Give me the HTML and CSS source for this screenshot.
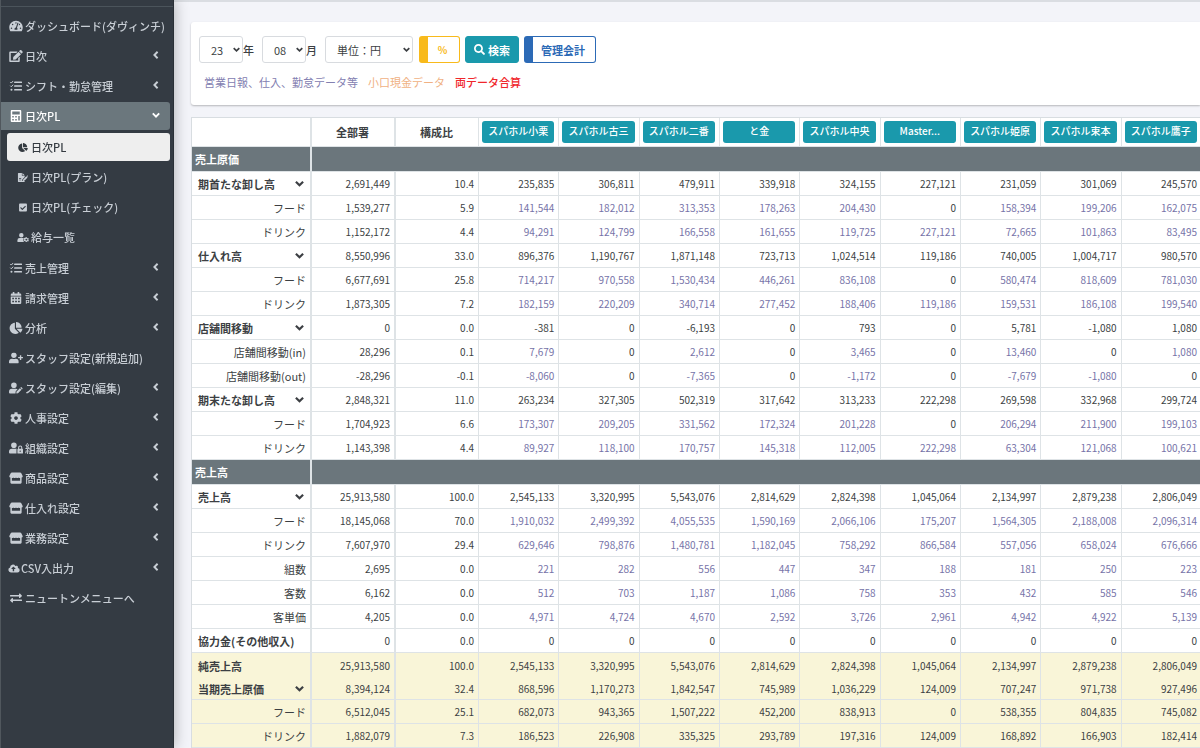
FILE: index.html
```html
<!DOCTYPE html>
<html lang="ja">
<head>
<meta charset="utf-8">
<title>日次PL</title>
<link rel="stylesheet" href="styles.css">
</head>
<body>
<svg class="sprite" aria-hidden="true">
  <symbol id="gauge" viewBox="0 0 576 512"><path d="M288 32C128.94 32 0 160.94 0 320c0 52.8 14.25 102.26 39.06 144.8 5.61 9.62 16.3 15.2 27.44 15.2h443c11.14 0 21.83-5.58 27.44-15.2C561.75 422.26 576 372.8 576 320c0-159.06-128.94-288-288-288zm0 64c14.71 0 26.58 10.13 30.32 23.65-1.11 2.26-2.64 4.23-3.45 6.67l-9.22 27.67c-5.13 3.49-10.97 6.01-17.64 6.01-17.67 0-32-14.33-32-32S270.33 96 288 96zM96 384c-17.67 0-32-14.33-32-32s14.33-32 32-32 32 14.33 32 32-14.33 32-32 32zm48-160c-17.67 0-32-14.33-32-32s14.33-32 32-32 32 14.33 32 32-14.33 32-32 32zm246.77-72.41l-61.33 184C343.13 347.33 352 364.54 352 384c0 11.72-3.38 22.55-8.88 32H232.88c-5.5-9.45-8.88-20.28-8.88-32 0-33.94 26.5-61.43 59.9-63.59l61.34-184.01c4.17-12.56 17.73-19.45 30.36-15.17 12.57 4.19 19.35 17.79 15.17 30.36zm14.66 57.2l15.52-46.55c3.47-1.29 7.13-2.23 11.05-2.23 17.67 0 32 14.33 32 32s-14.33 32-32 32c-11.38-.01-20.89-6.28-26.57-15.22zM480 384c-17.67 0-32-14.33-32-32s14.33-32 32-32 32 14.33 32 32-14.33 32-32 32z"/></symbol>
  <symbol id="edit" viewBox="0 0 576 512"><path d="M402.6 83.2l90.2 90.2c3.8 3.8 3.8 10 0 13.8L274.4 405.6l-92.8 10.3c-12.4 1.4-22.9-9.1-21.5-21.5l10.3-92.8L388.8 83.2c3.8-3.8 10-3.8 13.8 0zm162-22.9l-48.8-48.8c-15.2-15.2-39.9-15.2-55.2 0l-35.4 35.4c-3.8 3.8-3.8 10 0 13.8l90.2 90.2c3.8 3.8 10 3.8 13.8 0l35.4-35.4c15.2-15.3 15.2-40 0-55.2zM384 346.2V448H64V128h229.8c3.2 0 6.2-1.3 8.5-3.5l40-40c7.6-7.6 2.2-20.5-8.5-20.5H48C21.5 64 0 85.5 0 112v352c0 26.5 21.5 48 48 48h352c26.5 0 48-21.5 48-48V306.2c0-10.7-12.9-16-20.5-8.5l-40 40c-2.2 2.3-3.5 5.3-3.5 8.5z"/></symbol>
  <symbol id="tasks" viewBox="0 0 512 512"><path fill="none" stroke="currentColor" stroke-width="42" stroke-linecap="round" stroke-linejoin="round" d="M22 96l34 34 68-76M22 254l34 34 68-76"/><circle cx="62" cy="416" r="44"/><path d="M192 64h304q16 0 16 16v32q0 16-16 16H192q-16 0-16-16V80q0-16 16-16zM192 224h304q16 0 16 16v32q0 16-16 16H192q-16 0-16-16v-32q0-16 16-16zM192 384h304q16 0 16 16v32q0 16-16 16H192q-16 0-16-16v-32q0-16 16-16z"/></symbol>
  <symbol id="calc" viewBox="0 0 448 512"><path fill-rule="evenodd" d="M40 0h368q40 0 40 40v432q0 40-40 40H40q-40 0-40-40V40Q0 0 40 0zM64 64v128h320V64zM64 256v64h64v-64zM192 256v64h64v-64zM320 256v192h64V256zM64 384v64h64v-64zM192 384v64h64v-64z"/></symbol>
  <symbol id="pie" viewBox="0 0 544 512"><path d="M527.79 288H290.5l158.03 158.03c6.04 6.04 15.98 6.53 22.19.68 38.7-36.46 65.32-85.61 73.13-140.86 1.34-9.46-6.51-17.85-16.06-17.85zm-15.83-64.8C503.72 103.74 408.26 8.28 288.8.04 279.68-.59 272 7.1 272 16.24V240h223.77c9.14 0 16.82-7.68 16.19-16.8zM224 288V50.71c0-9.55-8.39-17.4-17.84-16.06C86.99 51.49-4.1 155.6.14 280.37 4.5 408.51 114.83 513.59 243.03 511.98c50.4-.63 96.97-16.87 135.26-44.03 7.9-5.6 8.42-17.23 1.57-24.08L224 288z"/></symbol>
  <symbol id="sign" viewBox="0 0 576 512"><path fill-rule="evenodd" d="M24 0h200v136q0 24 24 24h136v70L250 364v84h84l50-50v90q0 24-24 24H24q-24 0-24-24V24Q0 0 24 0zM64 380v36h120v-36zM64 300v36h120v-36zM256 0l128 128H256zM288 380l190-190 68 68-190 190h-68zM500 168l22-22q14-14 30 0l20 20q12 14 0 30l-22 22z"/></symbol>
  <symbol id="check" viewBox="0 0 448 512"><path fill-rule="evenodd" d="M48 32h352q48 0 48 48v352q0 48-48 48H48q-48 0-48-48V80q0-48 48-48zM196 394l184-184q10-10 0-22l-24-24q-12-10-22 0L184 314l-70-70q-10-10-22 0l-24 24q-10 12 0 22l104 104q12 10 24 0z"/></symbol>
  <symbol id="user" viewBox="0 0 448 512"><path d="M224 256c70.7 0 128-57.3 128-128S294.7 0 224 0 96 57.3 96 128s57.3 128 128 128zm89.6 32h-16.7c-22.2 10.2-46.9 16-72.9 16s-50.6-5.8-72.9-16h-16.7C60.2 288 0 348.2 0 422.4V464c0 26.5 21.5 48 48 48h352c26.5 0 48-21.5 48-48v-41.6c0-74.2-60.2-134.4-134.4-134.4z"/></symbol>
  <symbol id="user-plus" viewBox="0 0 640 512"><use href="#user" width="448" height="512"/><path d="M624 208h-64v-64c0-8.8-7.2-16-16-16h-32c-8.8 0-16 7.2-16 16v64h-64c-8.8 0-16 7.2-16 16v32c0 8.8 7.2 16 16 16h64v64c0 8.8 7.2 16 16 16h32c8.8 0 16-7.2 16-16v-64h64c8.8 0 16-7.2 16-16v-32c0-8.8-7.2-16-16-16z"/></symbol>
  <symbol id="user-cog" viewBox="0 0 640 512"><path d="M224 256a128 128 0 1 0 0-256 128 128 0 0 0 0 256zM134 288h180q30 0 56 14-26 32-20 66-22 30-6 66l30 78H48q-48 0-48-48v-42q0-134 134-134z"/><path fill-rule="evenodd" d="M480 240h64l10 42 32 18 42-12 12 40-10 24v40l22 34-32 54-44-12-30 16-10 28h-64l-12-40-30-16-40 12-30-54 28-30v-32l-28-32 30-54 42 12 30-16zM512 320a56 56 0 1 0 0 112 56 56 0 0 0 0-112z"/></symbol>
  <symbol id="user-edit" viewBox="0 0 640 512"><path d="M224 256a128 128 0 1 0 0-256 128 128 0 0 0 0 256zM134 288h180q44 0 80 28l-88 90-10 106H48q-48 0-48-48v-42q0-134 134-134z"/><path d="M338 426l160-160 72 72-160 160-72 14zM518 246l24-24q16-14 32 0l42 42q14 16 0 32l-24 24z"/></symbol>
  <symbol id="user-lock" viewBox="0 0 640 512"><path d="M224 256a128 128 0 1 0 0-256 128 128 0 0 0 0 256zM134 288h180q20 0 38 6-10 12-10 30v188H48q-48 0-48-48v-42q0-134 134-134z"/><path fill-rule="evenodd" d="M416 288v-48a96 96 0 0 1 192 0v48q32 0 32 32v160q0 32-32 32H416q-32 0-32-32V320q0-32 32-32zM464 288h96v-48a48 48 0 0 0-96 0zM512 368a32 32 0 1 0 0 64 32 32 0 0 0 0-64z"/></symbol>
  <symbol id="calendar" viewBox="0 0 448 512"><path fill-rule="evenodd" d="M96 0h48q12 0 12 12v52h136V12q0-12 12-12h48q12 0 12 12v52h36q48 0 48 48v48H0v-48q0-48 48-48h36V12Q84 0 96 0zM0 192h448v272q0 48-48 48H48q-48 0-48-48zM64 240v64h72v-64zM188 240v64h72v-64zM312 240v64h72v-64zM64 368v64h72v-64zM188 368v64h72v-64zM312 368v64h72v-64z"/></symbol>
  <symbol id="cog" viewBox="0 0 512 512"><path d="M487.4 315.7l-42.6-24.6c4.3-23.2 4.3-47 0-70.2l42.6-24.6c4.9-2.8 7.1-8.6 5.5-14-11.1-35.6-30-67.8-54.7-94.6-3.8-4.1-10-5.1-14.8-2.3L380.8 110c-17.9-15.4-38.5-27.3-60.8-35.1V25.8c0-5.6-3.9-10.5-9.4-11.7-36.7-8.2-74.3-7.8-109.2 0-5.5 1.2-9.4 6.1-9.4 11.7V75c-22.2 7.9-42.8 19.8-60.8 35.1L88.7 85.5c-4.9-2.8-11-1.9-14.8 2.3-24.7 26.7-43.6 58.9-54.7 94.6-1.7 5.4.6 11.2 5.5 14L67.3 221c-4.3 23.2-4.3 47 0 70.2l-42.6 24.6c-4.9 2.8-7.1 8.6-5.5 14 11.1 35.6 30 67.8 54.7 94.6 3.8 4.1 10 5.1 14.8 2.3l42.6-24.6c17.9 15.4 38.5 27.3 60.8 35.1v49.2c0 5.6 3.9 10.5 9.4 11.7 36.7 8.2 74.3 7.8 109.2 0 5.5-1.2 9.4-6.1 9.4-11.7v-49.2c22.2-7.9 42.8-19.8 60.8-35.1l42.6 24.6c4.9 2.8 11 1.9 14.8-2.3 24.7-26.7 43.6-58.9 54.7-94.6 1.5-5.5-.7-11.3-5.6-14.1zM256 336c-44.1 0-80-35.9-80-80s35.9-80 80-80 80 35.9 80 80-35.9 80-80 80z"/></symbol>
  <symbol id="store" viewBox="0 0 576 512"><path fill-rule="evenodd" d="M110 16h356q28 0 42 22l60 120q24 66-40 78v212q0 48-48 48H96q-48 0-48-48V236q-64-12-40-78L68 38q14-22 42-22zM112 256v112h352V256q-40-2-58-24-24 24-60 24t-58-24q-24 24-60 24t-58-24q-18 22-58 24z"/></symbol>
  <symbol id="cloud" viewBox="0 0 640 512"><path fill-rule="evenodd" d="M538 226q6-16 6-34a96 96 0 0 0-150-80A160 160 0 0 0 96 192v8A144 144 0 0 0 144 480h368a128 128 0 0 0 26-254zM394 288h-66v112q0 16-16 16h-48q-16 0-16-16V288h-66q-24-2-10-28l104-104q12-10 24 0l104 104q14 26-10 28z"/></symbol>
  <symbol id="swap" viewBox="0 0 512 512"><path d="M0 168v-16q0-24 24-24h360V80q4-30 40-16l80 80q14 16 0 32l-80 80q-36 14-40-16v-48H24q-24 0-24-24zM488 320H128v-48q-4-30-40-16L8 336q-14 16 0 32l80 80q36 14 40-16v-48h360q24 0 24-24v-16q0-24-24-24z"/></symbol>
  <symbol id="search" viewBox="0 0 512 512"><path d="M505 442.7L405.3 343c-4.5-4.5-10.6-7-17-7H372c27.6-35.3 44-79.7 44-128C416 93.1 322.9 0 208 0S0 93.1 0 208s93.1 208 208 208c48.3 0 92.7-16.4 128-44v16.3c0 6.4 2.5 12.5 7 17l99.7 99.7c9.4 9.4 24.6 9.4 33.9 0l28.3-28.3c9.4-9.4 9.4-24.6.1-34zM208 336c-70.7 0-128-57.2-128-128 0-70.7 57.2-128 128-128 70.7 0 128 57.2 128 128 0 70.7-57.2 128-128 128z"/></symbol>
  <symbol id="left" viewBox="0 0 10 10"><path fill="none" stroke="currentColor" stroke-width="2.4" d="M7 1L3 5l4 4"/></symbol>
  <symbol id="down" viewBox="0 0 10 10"><path fill="none" stroke="currentColor" stroke-width="2.4" d="M1 3l4 4 4-4"/></symbol>
</svg>
<div class="app">
  <nav class="sidebar">
    <ul class="menu">
      <li><a href="#"><svg class="icon"><use href="#gauge"/></svg>ダッシュボード(ダヴィンチ)</a></li>
      <li><a href="#"><svg class="icon"><use href="#edit"/></svg>日次<svg class="arrow"><use href="#left"/></svg></a></li>
      <li><a href="#"><svg class="icon"><use href="#tasks"/></svg>シフト・勤怠管理<svg class="arrow"><use href="#left"/></svg></a></li>
      <li><a href="#" class="open"><svg class="icon"><use href="#calc"/></svg>日次PL<svg class="arrow"><use href="#down"/></svg></a>
        <ul class="submenu">
          <li><a href="#" class="current"><svg class="icon"><use href="#pie"/></svg>日次PL</a></li>
          <li><a href="#"><svg class="icon"><use href="#sign"/></svg>日次PL(プラン)</a></li>
          <li><a href="#"><svg class="icon"><use href="#check"/></svg>日次PL(チェック)</a></li>
          <li><a href="#"><svg class="icon"><use href="#user-cog"/></svg>給与一覧</a></li>
        </ul>
      </li>
      <li><a href="#"><svg class="icon"><use href="#tasks"/></svg>売上管理<svg class="arrow"><use href="#left"/></svg></a></li>
      <li><a href="#"><svg class="icon"><use href="#calendar"/></svg>請求管理<svg class="arrow"><use href="#left"/></svg></a></li>
      <li><a href="#"><svg class="icon"><use href="#pie"/></svg>分析<svg class="arrow"><use href="#left"/></svg></a></li>
      <li><a href="#"><svg class="icon"><use href="#user-plus"/></svg>スタッフ設定(新規追加)</a></li>
      <li><a href="#"><svg class="icon"><use href="#user-edit"/></svg>スタッフ設定(編集)<svg class="arrow"><use href="#left"/></svg></a></li>
      <li><a href="#"><svg class="icon"><use href="#cog"/></svg>人事設定<svg class="arrow"><use href="#left"/></svg></a></li>
      <li><a href="#"><svg class="icon"><use href="#user-lock"/></svg>組織設定<svg class="arrow"><use href="#left"/></svg></a></li>
      <li><a href="#"><svg class="icon"><use href="#store"/></svg>商品設定<svg class="arrow"><use href="#left"/></svg></a></li>
      <li><a href="#"><svg class="icon"><use href="#store"/></svg>仕入れ設定<svg class="arrow"><use href="#left"/></svg></a></li>
      <li><a href="#"><svg class="icon"><use href="#store"/></svg>業務設定<svg class="arrow"><use href="#left"/></svg></a></li>
      <li><a href="#" class="compact"><svg class="icon"><use href="#cloud"/></svg>CSV入出力<svg class="arrow"><use href="#left"/></svg></a></li>
      <li><a href="#"><svg class="icon"><use href="#swap"/></svg>ニュートンメニューへ</a></li>
    </ul>
  </nav>
  <main class="main">
    <section class="card">
      <form class="filters">
        <span class="field"><select id="year" class="short"><option>23</option></select><svg class="caret"><use href="#down"/></svg></span>
        <label for="year">年</label>
        <span class="field"><select id="month" class="short"><option>08</option></select><svg class="caret"><use href="#down"/></svg></span>
        <label for="month">月</label>
        <span class="field"><select class="long" aria-label="単位"><option>単位：円</option></select><svg class="caret"><use href="#down"/></svg></span>
        <button type="button" class="btn striped yellow">%</button>
        <button type="button" class="btn search"><svg><use href="#search"/></svg>検索</button>
        <button type="button" class="btn striped blue">管理会計</button>
      </form>
      <p class="legend"><span class="daily">営業日報、仕入、勤怠データ等</span><span class="cash">小口現金データ</span><span class="both">両データ合算</span></p>
    </section>
    <div class="table-wrap">
      <table class="pl">
        <colgroup><col class="c-name"><col class="c-total"><col class="c-ratio"><col span="9"></colgroup>
        <thead>
          <tr><td></td><th>全部署</th><th>構成比</th><th><button type="button">スパホル小栗</button></th><th><button type="button">スパホル古三</button></th><th><button type="button">スパホル二番</button></th><th><button type="button">と金</button></th><th><button type="button">スパホル中央</button></th><th><button type="button">Master...</button></th><th><button type="button">スパホル姫原</button></th><th><button type="button">スパホル束本</button></th><th><button type="button">スパホル鷹子</button></th></tr>
        </thead>
        <tbody>
          <tr class="band"><th>売上原価</th><td colspan="11"></td></tr>
          <tr><th><button type="button" class="toggle">期首たな卸し高<svg><use href="#down"/></svg></button></th><td>2,691,449</td><td>10.4</td><td>235,835</td><td>306,811</td><td>479,911</td><td>339,918</td><td>324,155</td><td>227,121</td><td>231,059</td><td>301,069</td><td>245,570</td></tr>
          <tr class="sub"><th>フード</th><td>1,539,277</td><td>5.9</td><td>141,544</td><td>182,012</td><td>313,353</td><td>178,263</td><td>204,430</td><td class="zero">0</td><td>158,394</td><td>199,206</td><td>162,075</td></tr>
          <tr class="sub"><th>ドリンク</th><td>1,152,172</td><td>4.4</td><td>94,291</td><td>124,799</td><td>166,558</td><td>161,655</td><td>119,725</td><td>227,121</td><td>72,665</td><td>101,863</td><td>83,495</td></tr>
          <tr><th><button type="button" class="toggle">仕入れ高<svg><use href="#down"/></svg></button></th><td>8,550,996</td><td>33.0</td><td>896,376</td><td>1,190,767</td><td>1,871,148</td><td>723,713</td><td>1,024,514</td><td>119,186</td><td>740,005</td><td>1,004,717</td><td>980,570</td></tr>
          <tr class="sub"><th>フード</th><td>6,677,691</td><td>25.8</td><td>714,217</td><td>970,558</td><td>1,530,434</td><td>446,261</td><td>836,108</td><td class="zero">0</td><td>580,474</td><td>818,609</td><td>781,030</td></tr>
          <tr class="sub"><th>ドリンク</th><td>1,873,305</td><td>7.2</td><td>182,159</td><td>220,209</td><td>340,714</td><td>277,452</td><td>188,406</td><td>119,186</td><td>159,531</td><td>186,108</td><td>199,540</td></tr>
          <tr><th><button type="button" class="toggle">店舗間移動<svg><use href="#down"/></svg></button></th><td>0</td><td>0.0</td><td>-381</td><td>0</td><td>-6,193</td><td>0</td><td>793</td><td>0</td><td>5,781</td><td>-1,080</td><td>1,080</td></tr>
          <tr class="sub"><th>店舗間移動(in)</th><td>28,296</td><td>0.1</td><td>7,679</td><td class="zero">0</td><td>2,612</td><td class="zero">0</td><td>3,465</td><td class="zero">0</td><td>13,460</td><td class="zero">0</td><td>1,080</td></tr>
          <tr class="sub"><th>店舗間移動(out)</th><td>-28,296</td><td>-0.1</td><td>-8,060</td><td class="zero">0</td><td>-7,365</td><td class="zero">0</td><td>-1,172</td><td class="zero">0</td><td>-7,679</td><td>-1,080</td><td class="zero">0</td></tr>
          <tr><th><button type="button" class="toggle">期末たな卸し高<svg><use href="#down"/></svg></button></th><td>2,848,321</td><td>11.0</td><td>263,234</td><td>327,305</td><td>502,319</td><td>317,642</td><td>313,233</td><td>222,298</td><td>269,598</td><td>332,968</td><td>299,724</td></tr>
          <tr class="sub"><th>フード</th><td>1,704,923</td><td>6.6</td><td>173,307</td><td>209,205</td><td>331,562</td><td>172,324</td><td>201,228</td><td class="zero">0</td><td>206,294</td><td>211,900</td><td>199,103</td></tr>
          <tr class="sub"><th>ドリンク</th><td>1,143,398</td><td>4.4</td><td>89,927</td><td>118,100</td><td>170,757</td><td>145,318</td><td>112,005</td><td>222,298</td><td>63,304</td><td>121,068</td><td>100,621</td></tr>
          <tr class="band"><th>売上高</th><td colspan="11"></td></tr>
          <tr><th><button type="button" class="toggle">売上高<svg><use href="#down"/></svg></button></th><td>25,913,580</td><td>100.0</td><td>2,545,133</td><td>3,320,995</td><td>5,543,076</td><td>2,814,629</td><td>2,824,398</td><td>1,045,064</td><td>2,134,997</td><td>2,879,238</td><td>2,806,049</td></tr>
          <tr class="sub"><th>フード</th><td>18,145,068</td><td>70.0</td><td>1,910,032</td><td>2,499,392</td><td>4,055,535</td><td>1,590,169</td><td>2,066,106</td><td>175,207</td><td>1,564,305</td><td>2,188,008</td><td>2,096,314</td></tr>
          <tr class="sub"><th>ドリンク</th><td>7,607,970</td><td>29.4</td><td>629,646</td><td>798,876</td><td>1,480,781</td><td>1,182,045</td><td>758,292</td><td>866,584</td><td>557,056</td><td>658,024</td><td>676,666</td></tr>
          <tr class="sub"><th>組数</th><td>2,695</td><td>0.0</td><td>221</td><td>282</td><td>556</td><td>447</td><td>347</td><td>188</td><td>181</td><td>250</td><td>223</td></tr>
          <tr class="sub"><th>客数</th><td>6,162</td><td>0.0</td><td>512</td><td>703</td><td>1,187</td><td>1,086</td><td>758</td><td>353</td><td>432</td><td>585</td><td>546</td></tr>
          <tr class="sub"><th>客単価</th><td>4,205</td><td>0.0</td><td>4,971</td><td>4,724</td><td>4,670</td><td>2,592</td><td>3,726</td><td>2,961</td><td>4,942</td><td>4,922</td><td>5,139</td></tr>
          <tr><th>協力金(その他収入)</th><td>0</td><td>0.0</td><td>0</td><td>0</td><td>0</td><td>0</td><td>0</td><td>0</td><td>0</td><td>0</td><td>0</td></tr>
        </tbody>
        <tbody class="result">
          <tr class="net"><th>純売上高</th><td>25,913,580</td><td>100.0</td><td>2,545,133</td><td>3,320,995</td><td>5,543,076</td><td>2,814,629</td><td>2,824,398</td><td>1,045,064</td><td>2,134,997</td><td>2,879,238</td><td>2,806,049</td></tr>
          <tr class="cost"><th><button type="button" class="toggle">当期売上原価<svg><use href="#down"/></svg></button></th><td>8,394,124</td><td>32.4</td><td>868,596</td><td>1,170,273</td><td>1,842,547</td><td>745,989</td><td>1,036,229</td><td>124,009</td><td>707,247</td><td>971,738</td><td>927,496</td></tr>
          <tr class="sub"><th>フード</th><td>6,512,045</td><td>25.1</td><td>682,073</td><td>943,365</td><td>1,507,222</td><td>452,200</td><td>838,913</td><td>0</td><td>538,355</td><td>804,835</td><td>745,082</td></tr>
          <tr class="sub"><th>ドリンク</th><td>1,882,079</td><td>7.3</td><td>186,523</td><td>226,908</td><td>335,325</td><td>293,789</td><td>197,316</td><td>124,009</td><td>168,892</td><td>166,903</td><td>182,414</td></tr>
        </tbody>
      </table>
    </div>
  </main>
</div>
</body>
</html>
```

FILE: styles.css
```css
* {
  box-sizing: border-box;
}

body {
  margin: 0;
  font-family: "Noto Sans CJK JP", sans-serif;
  font-size: 11px;
  line-height: 16px;
  color: #3c3f43;
  background: #f3f4f9;
}

.sprite {
  display: none;
}

svg {
  fill: currentColor;
  flex: none;
}

button,
select {
  font: inherit;
  color: inherit;
}

.app {
  display: flex;
  height: 100vh;
  overflow: hidden;
}

/* Sidebar */
.sidebar {
  flex: none;
  width: 174px;
  padding-top: 6px;
  background: #343b43;
  border-left: 1px solid #50575d;
  border-right: 1px solid #2a3036;
  box-shadow: 0 0 14px rgba(0, 0, 0, 0.3);
  z-index: 1;
}

.menu,
.submenu {
  list-style: none;
  margin: 0;
  padding: 0;
}

.menu {
  padding: 5px 3px 0 0;
  border-top: 1px solid #4b545b;
}

.menu a {
  display: flex;
  align-items: center;
  gap: 2px;
  height: 28px;
  margin-bottom: 2px;
  padding: 0 10px 0 8px;
  border-radius: 0 3px 3px 0;
  color: #c8ced5;
  font-weight: 500;
  text-decoration: none;
  white-space: nowrap;
}

.menu .icon {
  width: 14px;
  height: 12px;
}

.menu .arrow {
  width: 8px;
  height: 8px;
  margin: 0 0 2px auto;
}

.menu .open {
  background: #6b777d;
  color: #fff;
}

.submenu {
  padding: 1px 0 1px 6px;
}

.submenu a {
  padding-left: 10px;
  border-radius: 3px;
}

.submenu .icon {
  width: 12px;
  height: 9px;
}

.submenu .current {
  background: #eee;
  color: #343a40;
}

.menu .compact {
  gap: 1px;
  padding-left: 7px;
}

.compact .icon {
  width: 12px;
  height: 9px;
}

/* Content */
.main {
  flex: 1;
  min-width: 0;
  padding: 20px 0 0 17px;
  border-top: 2px solid #dadde2;
}

.card {
  margin-bottom: 12px;
  padding: 14px 0 15px 8px;
  background: #fff;
  border-radius: 3px 0 0 3px;
  box-shadow: 0 1px 2px rgba(0, 0, 0, 0.25);
}

.filters {
  display: flex;
  align-items: center;
}

.field {
  position: relative;
  display: flex;
}

.field select {
  appearance: none;
  height: 27px;
  padding: 0 0 0 11px;
  border: 1px solid #d8dbdf;
  border-radius: 3px;
  background: #fff;
}

.field .short {
  width: 44px;
}

.field .long {
  width: 88px;
  margin-right: 6px;
}

.caret {
  position: absolute;
  top: 10px;
  right: 3px;
  width: 7px;
  height: 7px;
  pointer-events: none;
}

.long + .caret {
  right: 9px;
}

.filters label {
  margin-right: 8px;
  font-weight: 500;
}

.btn {
  display: flex;
  align-items: center;
  justify-content: center;
  height: 27px;
  border: 1px solid;
  border-radius: 3px;
  background: #fff;
  font-weight: 700;
  white-space: nowrap;
}

.btn + .btn {
  margin-left: 5px;
}

.striped {
  padding: 0 10px 0 8px;
  border-left-width: 9px;
}

.yellow {
  width: 41px;
  font-size: 10px;
  color: #f8ba1c;
}

.blue {
  width: 72px;
  color: #2c6ab6;
}

.search {
  gap: 3px;
  width: 54px;
  padding: 0 8px;
  border-color: #1a99ac;
  background: #1a99ac;
  color: #fff;
}

.search svg {
  width: 11px;
  height: 11px;
}

.legend {
  display: flex;
  gap: 10px;
  margin: 11px 0 0;
  padding-left: 5px;
}

.daily {
  color: #8380b1;
}

.cash {
  color: #f0b184;
}

.both {
  color: #f0262b;
  font-weight: 500;
}

/* Profit and loss table */
.table-wrap {
  overflow-x: auto;
  scrollbar-width: none;
}

.pl {
  width: 100%;
  min-width: 1011px;
  table-layout: fixed;
  border-collapse: separate;
  border-spacing: 0;
  border-left: 1px solid #d8dde1;
  border-top: 1px solid #d8dde1;
  background: #fff;
}

.c-name {
  width: 120px;
}

.c-total {
  width: 84px;
}

.c-ratio {
  width: 83px;
}

.pl th,
.pl td {
  height: 24px;
  padding: 0 4px 0 3px;
  border-right: 1px solid #dee3e6;
  border-bottom: 1px solid #dee3e6;
  white-space: nowrap;
}

.pl tr > :nth-child(-n+2) {
  border-right-width: 2px;
}

.pl td {
  font-size: 10px;
  text-align: right;
}

.pl th {
  font-weight: 500;
}

.pl thead th,
.pl thead td {
  height: 29px;
}

.pl thead th {
  font-weight: 700;
}

.pl thead button {
  display: block;
  width: 100%;
  height: 22px;
  padding: 0 0 2px;
  border: 0;
  border-radius: 3px;
  background: #1a99ac;
  color: #fff;
  font-size: 10px;
  font-weight: 500;
}

.pl tbody th {
  padding-left: 6px;
  text-align: left;
  font-weight: 700;
}

.pl .sub th {
  font-weight: 400;
  text-align: right;
}

.sub td:nth-child(n+4) {
  color: #7673a8;
}

.pl .sub .zero,
.result .sub td:nth-child(n+4) {
  color: inherit;
}

.pl .band th,
.pl .band td {
  height: 25px;
  background: #6b767c;
}

.pl .band th {
  padding-left: 3px;
  color: #fff;
}

.toggle {
  display: flex;
  align-items: center;
  justify-content: space-between;
  width: 100%;
  padding: 0 2px 0 0;
  border: 0;
  background: none;
}

.toggle svg {
  width: 9px;
  height: 9px;
}

.result {
  background: #f9f5d8;
}

.result .net th,
.result .net td {
  height: 25px;
  border-bottom: 0;
}

.result .cost th,
.result .cost td {
  height: 22px;
}
```
